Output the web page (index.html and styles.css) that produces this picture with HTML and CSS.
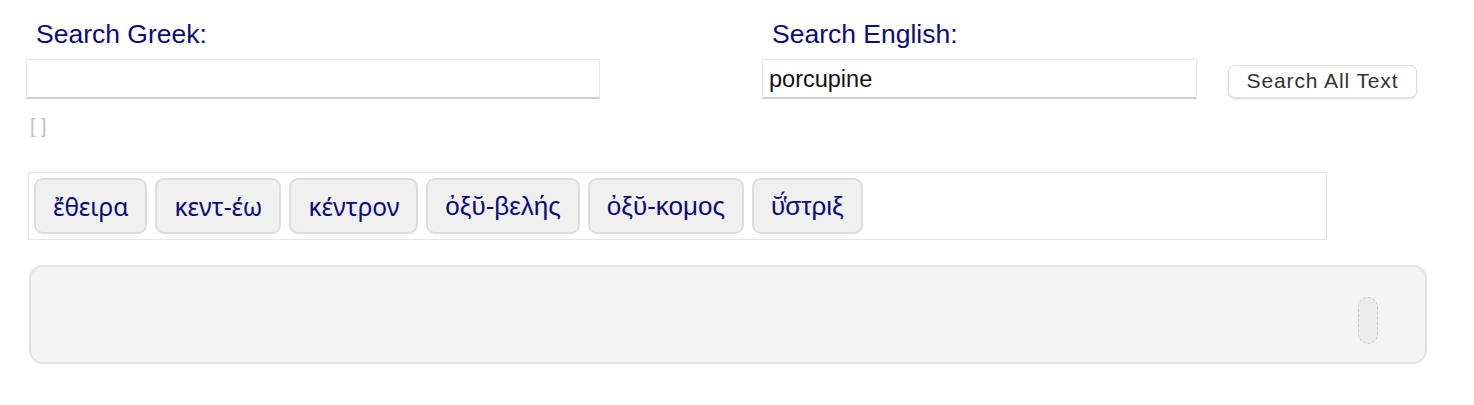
FILE: index.html
```html
<!DOCTYPE html>
<html lang="en">
<head>
<meta charset="utf-8">
<title>Lexicon Search</title>
<link rel="stylesheet" href="styles.css">
</head>
<body>
<div class="page">
  <div class="search-row">
    <div class="field field-greek">
      <label class="field-label" for="greek">Search Greek:</label>
      <input class="text-input" id="greek" type="text" value="">
      <div class="hint">[ ]</div>
    </div>
    <div class="field field-english">
      <label class="field-label" for="english">Search English:</label>
      <div class="input-row">
        <input class="text-input text-input-english" id="english" type="text" value="porcupine">
        <button class="btn" type="button">Search All Text</button>
      </div>
    </div>
  </div>

  <div class="chips">
    <button class="chip" type="button">ἔθειρα</button>
    <button class="chip" type="button">κεντ-έω</button>
    <button class="chip" type="button">κέντρον</button>
    <button class="chip chip-alt" type="button">ὀξῠ-βελής</button>
    <button class="chip chip-alt" type="button">ὀξῠ-κομος</button>
    <button class="chip chip-alt" type="button">ῠ̔́στριξ</button>
  </div>

  <div class="panel">
    <div class="handle"></div>
  </div>
</div>
</body>
</html>
```

FILE: styles.css
```css
html, body {
  margin: 0;
  padding: 0;
  background: #ffffff;
}

body {
  font-family: "Liberation Sans", Arial, sans-serif;
}

.page {
  padding: 20px 0 0 26px;
  width: 1402px;
}

.search-row {
  display: flex;
  gap: 162px;
}

.field {
  display: flex;
  flex-direction: column;
}

.field-greek {
  width: 574px;
}

.field-label {
  color: #0b0b7a;
  font-size: 26.5px;
  line-height: 28px;
  padding-left: 10px;
  margin-bottom: 11px;
}

.text-input {
  box-sizing: border-box;
  height: 40px;
  width: 100%;
  border: 1px solid #e9e9e9;
  border-bottom: 2px solid #cfcfcf;
  background: #fff;
  font-family: "Liberation Sans", Arial, sans-serif;
  font-size: 23.5px;
  color: #111;
  padding: 2px 6px 0;
  outline: none;
}

.hint {
  margin-top: 15px;
  padding-left: 4px;
  color: #c2c2c2;
  font-size: 20px;
  line-height: 24px;
}

.input-row {
  display: flex;
  align-items: center;
  gap: 31px;
}

.text-input-english {
  width: 435px;
}

.btn {
  margin-top: 4px;
  height: 33px;
  width: 189px;
  background: #fff;
  border: 1px solid #dedede;
  border-radius: 7px;
  box-shadow: 0 1px 2px rgba(0, 0, 0, 0.15);
  font-family: "Liberation Sans", Arial, sans-serif;
  font-size: 21px;
  letter-spacing: 0.9px;
  color: #333;
  padding: 0;
}

.chips {
  margin: 34px 0 0 2px;
  width: 1299px;
  box-sizing: border-box;
  border: 1px solid #e6e6e6;
  padding: 5px;
  display: flex;
  gap: 8px;
}

.chip {
  height: 56px;
  box-sizing: border-box;
  padding: 0 17px;
  background: #f0f0f0;
  border: 2px solid #dcdcdc;
  border-radius: 9px;
  color: #0b0b7a;
  font-family: "Noto Sans", sans-serif;
  font-size: 24.5px;
}

.chip-alt {
  font-family: "Liberation Sans", Arial, sans-serif;
  font-size: 26px;
}

.panel {
  margin: 25px 0 0 3px;
  width: 1398px;
  height: 99px;
  box-sizing: border-box;
  background: #f4f4f4;
  border: 2px solid #e3e3e3;
  border-radius: 14px;
  display: flex;
  justify-content: flex-end;
  align-items: flex-start;
  padding: 30px 47px 0 0;
}

.handle {
  width: 20px;
  height: 47px;
  box-sizing: border-box;
  border: 1px dashed #c4c4c4;
  background: #ececec;
  border-radius: 10px;
}
```
